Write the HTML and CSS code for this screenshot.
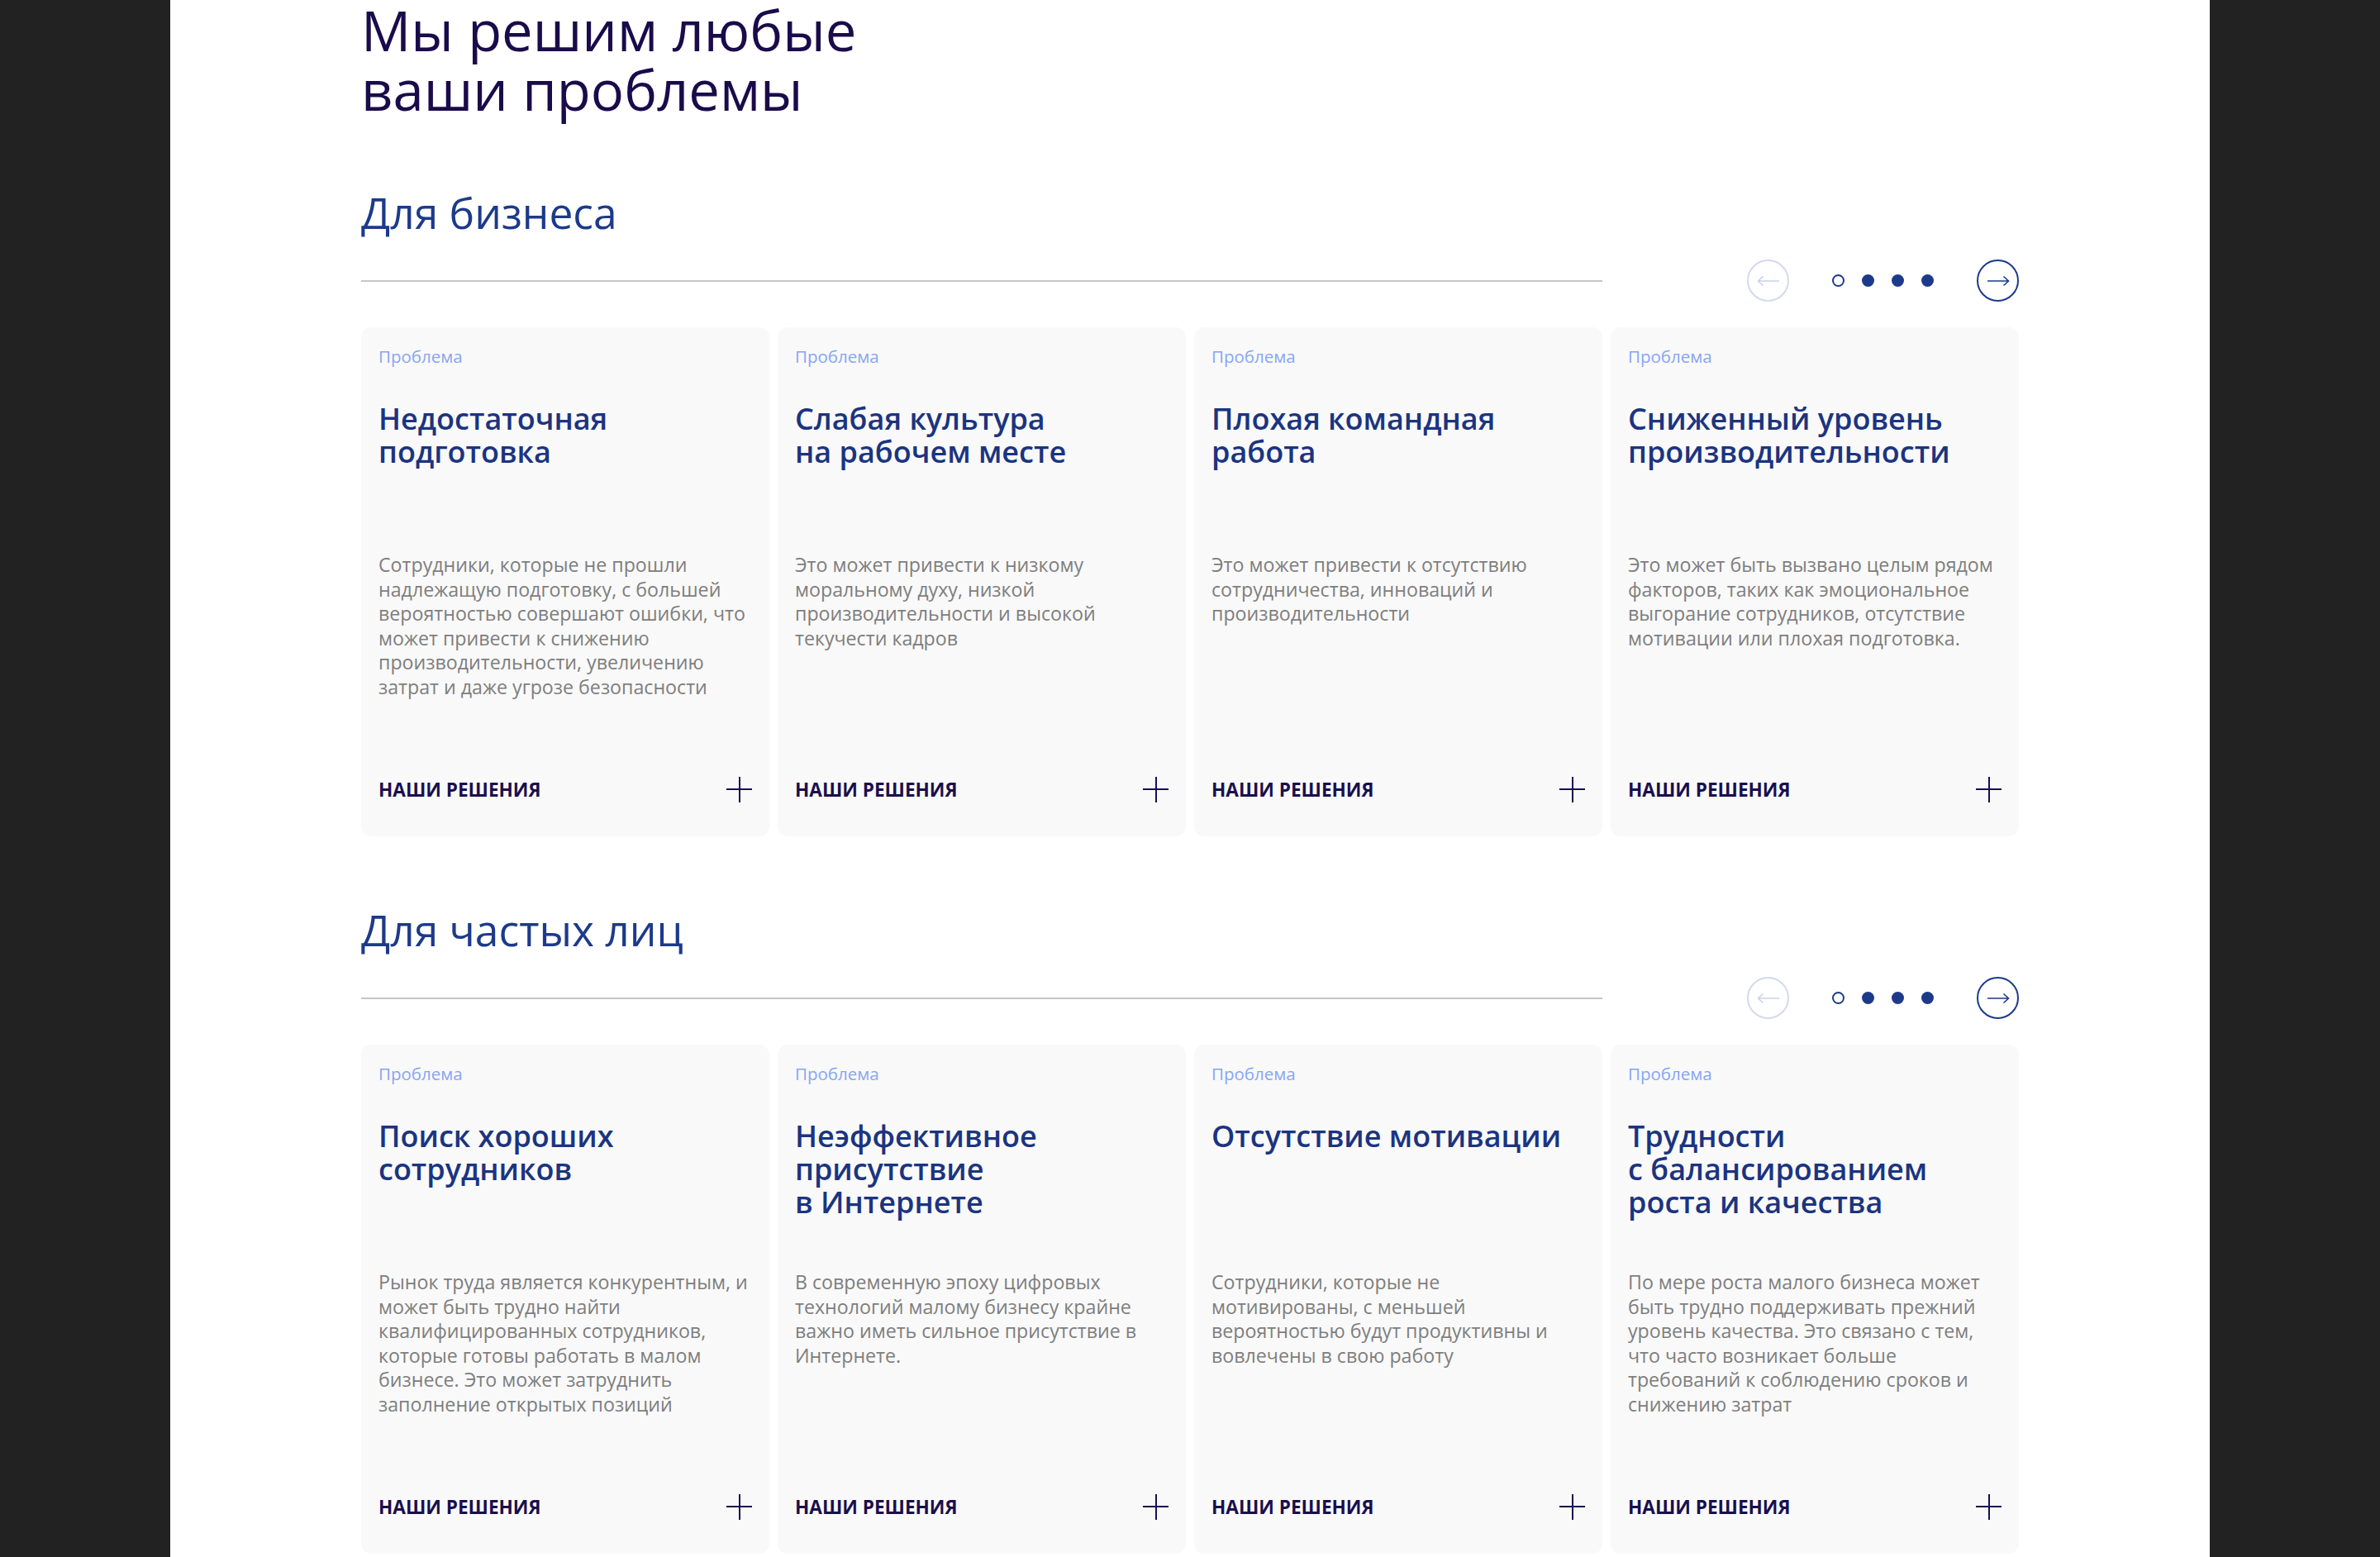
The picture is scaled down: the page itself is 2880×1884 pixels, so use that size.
FILE: index.html
```html
<!DOCTYPE html>
<html lang="ru">
<head>
<meta charset="utf-8">
<title>Мы решим любые ваши проблемы</title>
<link rel="stylesheet" href="styles.css">
</head>
<body>
<div class="page">
  <h1 class="title">Мы решим любые<br>ваши проблемы</h1>

  <section class="group">
    <h2 class="group-title">Для бизнеса</h2>
    <div class="bar">
      <div class="bar-line"></div>
      <div class="nav">
        <button class="arrow arrow-off" aria-label="Назад">
          <svg width="28" height="14" viewBox="0 0 28 14"><path d="M27 7H1.5M7.5 1.5L1.5 7L7.5 12.5" fill="none" stroke="currentColor" stroke-width="1.6"/></svg>
        </button>
        <div class="dots"><span class="dot dot-empty"></span><span class="dot"></span><span class="dot"></span><span class="dot"></span></div>
        <button class="arrow" aria-label="Вперёд">
          <svg width="28" height="14" viewBox="0 0 28 14"><path d="M1 7H26.5M20.5 1.5L26.5 7L20.5 12.5" fill="none" stroke="currentColor" stroke-width="1.6"/></svg>
        </button>
      </div>
    </div>
    <div class="cards">
      <article class="card">
        <div class="card-label">Проблема</div>
        <h3 class="card-title">Недостаточная<br>подготовка</h3>
        <p class="card-text">Сотрудники, которые не прошли<br>надлежащую подготовку, с большей<br>вероятностью совершают ошибки, что<br>может привести к снижению<br>производительности, увеличению<br>затрат и даже угрозе безопасности</p>
        <div class="card-foot"><span>НАШИ РЕШЕНИЯ</span><span class="plus"></span></div>
      </article>
      <article class="card">
        <div class="card-label">Проблема</div>
        <h3 class="card-title">Слабая культура<br>на рабочем месте</h3>
        <p class="card-text">Это может привести к низкому<br>моральному духу, низкой<br>производительности и высокой<br>текучести кадров</p>
        <div class="card-foot"><span>НАШИ РЕШЕНИЯ</span><span class="plus"></span></div>
      </article>
      <article class="card">
        <div class="card-label">Проблема</div>
        <h3 class="card-title">Плохая командная<br>работа</h3>
        <p class="card-text">Это может привести к отсутствию<br>сотрудничества, инноваций и<br>производительности</p>
        <div class="card-foot"><span>НАШИ РЕШЕНИЯ</span><span class="plus"></span></div>
      </article>
      <article class="card">
        <div class="card-label">Проблема</div>
        <h3 class="card-title">Сниженный уровень<br>производительности</h3>
        <p class="card-text">Это может быть вызвано целым рядом<br>факторов, таких как эмоциональное<br>выгорание сотрудников, отсутствие<br>мотивации или плохая подготовка.</p>
        <div class="card-foot"><span>НАШИ РЕШЕНИЯ</span><span class="plus"></span></div>
      </article>
    </div>
  </section>

  <section class="group">
    <h2 class="group-title">Для частых лиц</h2>
    <div class="bar">
      <div class="bar-line"></div>
      <div class="nav">
        <button class="arrow arrow-off" aria-label="Назад">
          <svg width="28" height="14" viewBox="0 0 28 14"><path d="M27 7H1.5M7.5 1.5L1.5 7L7.5 12.5" fill="none" stroke="currentColor" stroke-width="1.6"/></svg>
        </button>
        <div class="dots"><span class="dot dot-empty"></span><span class="dot"></span><span class="dot"></span><span class="dot"></span></div>
        <button class="arrow" aria-label="Вперёд">
          <svg width="28" height="14" viewBox="0 0 28 14"><path d="M1 7H26.5M20.5 1.5L26.5 7L20.5 12.5" fill="none" stroke="currentColor" stroke-width="1.6"/></svg>
        </button>
      </div>
    </div>
    <div class="cards">
      <article class="card">
        <div class="card-label">Проблема</div>
        <h3 class="card-title">Поиск хороших<br>сотрудников</h3>
        <p class="card-text">Рынок труда является конкурентным, и<br>может быть трудно найти<br>квалифицированных сотрудников,<br>которые готовы работать в малом<br>бизнесе. Это может затруднить<br>заполнение открытых позиций</p>
        <div class="card-foot"><span>НАШИ РЕШЕНИЯ</span><span class="plus"></span></div>
      </article>
      <article class="card">
        <div class="card-label">Проблема</div>
        <h3 class="card-title">Неэффективное<br>присутствие<br>в Интернете</h3>
        <p class="card-text">В современную эпоху цифровых<br>технологий малому бизнесу крайне<br>важно иметь сильное присутствие в<br>Интернете.</p>
        <div class="card-foot"><span>НАШИ РЕШЕНИЯ</span><span class="plus"></span></div>
      </article>
      <article class="card">
        <div class="card-label">Проблема</div>
        <h3 class="card-title">Отсутствие мотивации</h3>
        <p class="card-text">Сотрудники, которые не<br>мотивированы, с меньшей<br>вероятностью будут продуктивны и<br>вовлечены в свою работу</p>
        <div class="card-foot"><span>НАШИ РЕШЕНИЯ</span><span class="plus"></span></div>
      </article>
      <article class="card">
        <div class="card-label">Проблема</div>
        <h3 class="card-title">Трудности<br>с балансированием<br>роста и качества</h3>
        <p class="card-text">По мере роста малого бизнеса может<br>быть трудно поддерживать прежний<br>уровень качества. Это связано с тем,<br>что часто возникает больше<br>требований к соблюдению сроков и<br>снижению затрат</p>
        <div class="card-foot"><span>НАШИ РЕШЕНИЯ</span><span class="plus"></span></div>
      </article>
    </div>
  </section>
</div>
</body>
</html>
```

FILE: styles.css
```css
* { box-sizing: border-box; }

html, body {
  margin: 0;
  padding: 0;
}

body {
  background: #222222;
  font-family: "Open Sans", "Noto Sans", "DejaVu Sans", sans-serif;
}

.page {
  width: 2468px;
  min-height: 100vh;
  margin: 0 auto;
  background: #ffffff;
  padding: 0 231px 120px;
}

.title {
  margin: 0;
  font-size: 67px;
  line-height: 72px;
  font-weight: 400;
  color: #1a0b4b;
}

.group {
  padding-top: 83px;
}

.group-title {
  margin: 0;
  font-size: 51.5px;
  line-height: 60px;
  font-weight: 400;
  color: #1d3a8a;
}

.bar {
  display: grid;
  grid-template-columns: repeat(4, 1fr);
  column-gap: 10px;
  align-items: center;
  margin-top: 27px;
  height: 51px;
}

.bar-line {
  grid-column: 1 / 4;
  height: 2px;
  background: #c6c6c6;
}

.nav {
  display: flex;
  justify-content: flex-end;
  align-items: center;
  gap: 52px;
}

.arrow {
  width: 51px;
  height: 51px;
  border-radius: 50%;
  border: 2px solid #1d3a8a;
  background: transparent;
  color: #1d3a8a;
  padding: 0;
  display: flex;
  align-items: center;
  justify-content: center;
}

.arrow-off {
  border-color: #d3daec;
  color: #c9d2ea;
}

.dots {
  display: flex;
  gap: 21px;
}

.dot {
  width: 15px;
  height: 15px;
  border-radius: 50%;
  background: #1d3a8a;
}

.dot-empty {
  background: transparent;
  border: 2px solid #1d3a8a;
}

.cards {
  display: grid;
  grid-template-columns: repeat(4, 1fr);
  gap: 10px;
  margin-top: 31px;
}

.card {
  background: #f9f9f9;
  border-radius: 12px;
  height: 616px;
  padding: 22px 21px 41px;
  display: flex;
  flex-direction: column;
}

.card-label {
  font-size: 20.5px;
  line-height: 26px;
  color: #86a6f5;
}

.card-title {
  margin: 43px 0 0;
  min-height: 120px;
  font-size: 36px;
  line-height: 40px;
  font-weight: 600;
  color: #1b3480;
}

.card-text {
  margin: 62px 0 0;
  font-size: 23.2px;
  line-height: 29.5px;
  color: #7e7e7e;
  white-space: nowrap;
}

.card-foot {
  margin-top: auto;
  display: flex;
  justify-content: space-between;
  align-items: center;
  height: 32px;
  font-size: 22.6px;
  font-weight: 700;
  color: #1a0f4d;
}

.plus {
  position: relative;
  width: 31px;
  height: 31px;
}

.plus::before,
.plus::after {
  content: "";
  position: absolute;
  background: #1a0f4d;
}

.plus::before {
  left: 0;
  right: 0;
  top: 14.5px;
  height: 2px;
}

.plus::after {
  top: 0;
  bottom: 0;
  left: 14.5px;
  width: 2px;
}
```
